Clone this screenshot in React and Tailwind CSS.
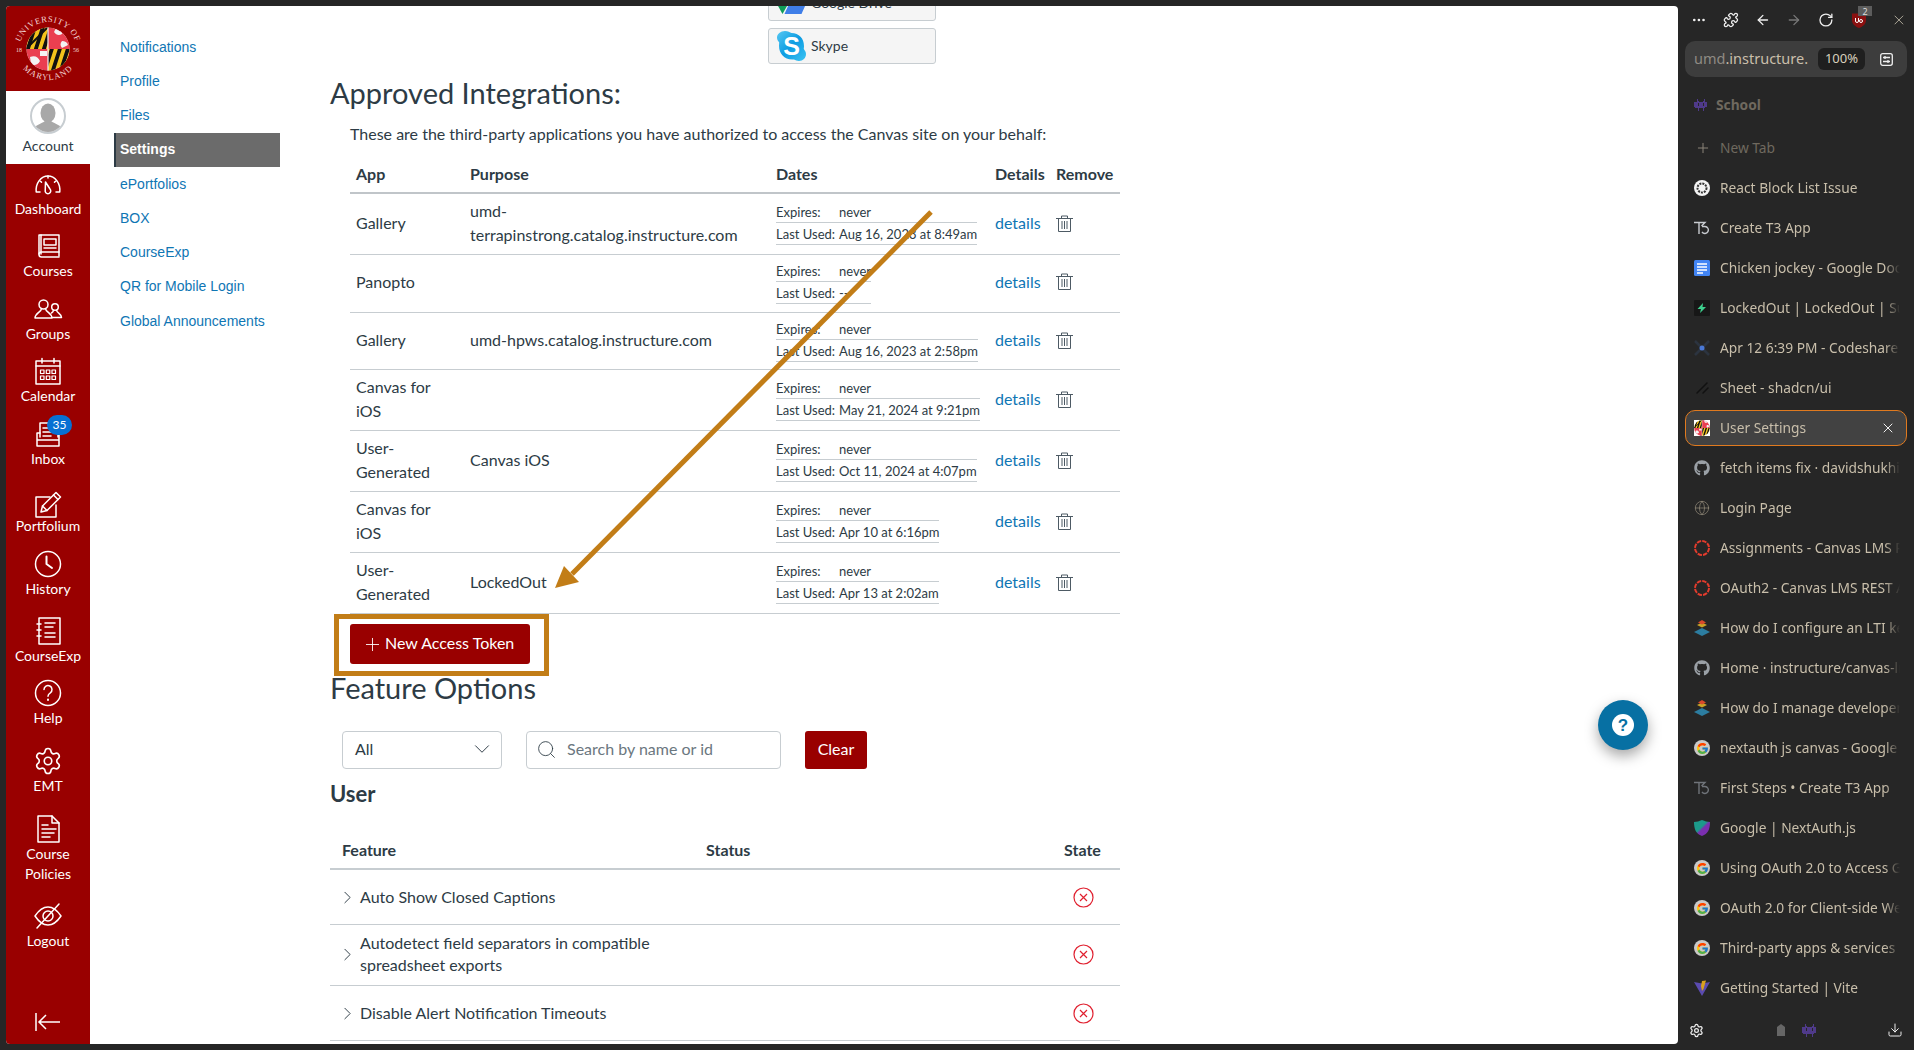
import React from "react";
import { FaGithub } from "react-icons/fa";
import { FcGoogle } from "react-icons/fc";
import { Globe, Settings, X, Plus, ChevronRight, ChevronDown, Search, ArrowLeft, ArrowRight, RotateCw, Puzzle, Ellipsis, Download } from "lucide-react";

// canvas global nav icons
function NavSvg({ children, w = 32, h = 32 }) {
  return (
    <svg width={w} height={h} viewBox="0 0 32 32" fill="none" stroke="white" strokeWidth="1.5" strokeLinecap="round" strokeLinejoin="round">
      {children}
    </svg>
  );
}

const DashboardIcon = () => (
  <NavSvg>
    <path d="M8 24H4.2C3.4 15 9 8 16 8s12.600 7 11.800 16H24" />
    <path d="M16 8v2M8 13l1.500 1.200M24 13l-1.500 1.200" />
    <path d="M13.500 14l4.500 7a2.800 2.800 0 1 1-4.800 2.400z" />
  </NavSvg>
);
const CoursesIcon = () => (
  <NavSvg>
    <path d="M9 24V5h18v21" />
    <path d="M27 22H9.500A2.500 2.500 0 0 0 7 24.500 2.500 2.500 0 0 0 9.500 27H27" />
    <path d="M7 24V5h2M12 9h12v6H12zM12 18h12" />
  </NavSvg>
);
const GroupsIcon = () => (
  <NavSvg>
    <circle cx="11.500" cy="11.500" r="4.500" />
    <path d="M9.500 15.500C9.500 19 3 20 3 25h17c0-5-6.500-6-6.500-9.500" />
    <circle cx="23" cy="14" r="3.300" />
    <path d="M21.500 17c0 2-2 3-2 3M24.500 17c0 3 5 3.500 5 7.500h-9" />
  </NavSvg>
);
const CalendarIcon = () => (
  <NavSvg>
    <rect x="4" y="6" width="24" height="23" />
    <path d="M4 11h24M10 3.500V8M22 3.500V8" />
    <path d="M8.500 15h3.500v3.500H8.500zM14.300 15h3.500v3.500h-3.500zM20 15h3.500v3.500H20zM8.500 21h3.500v3.500H8.500zM14.300 21h3.500v3.500h-3.500zM20 21h3.500v3.500H20z" strokeWidth="1.200" />
  </NavSvg>
);
const InboxIcon = () => (
  <NavSvg>
    <path d="M8 19V5h14l4 4v10" />
    <path d="M11 10h8M11 14h11M11 18h8" />
    <path d="M8 15H5v13h22V15h-1M5 22h22" />
  </NavSvg>
);
const PortfoliumIcon = () => (
  <NavSvg>
    <path d="M24 17v12H4V9h14" />
    <path d="M9 24l1.500-6L24 4.500l4.500 4.500L15 22.500z" />
    <path d="M21.500 7l4.500 4.500M10.500 18l4.500 4.500" />
  </NavSvg>
);
const HistoryIcon = () => (
  <NavSvg>
    <circle cx="16" cy="16" r="12.500" />
    <path d="M14.500 8.500V16l5.500 4" strokeWidth="2" />
  </NavSvg>
);
const CourseExpIcon = () => (
  <NavSvg>
    <path d="M7 3h21v26H7z" />
    <path d="M5 9h4M5 15h4M5 21h4M13 8h10M13 12h8M13 18h10M13 22h10" />
  </NavSvg>
);
const HelpIcon = () => (
  <NavSvg>
    <circle cx="16" cy="16" r="12.500" />
    <path d="M12 12.500a4 4 0 1 1 6.300 3.300c-1.500 1-2.300 1.800-2.300 3.400" />
    <path d="M16 22.500v.5" strokeWidth="2" />
  </NavSvg>
);
const EmtIcon = () => <Settings size={30} strokeWidth={1.300} color="white" />;
const PoliciesIcon = () => (
  <NavSvg>
    <path d="M6 3h14l7 7v19H6z" />
    <path d="M20 3v7h7" />
    <path d="M10 12h6M10 16h14M10 20h12M10 24h8" />
  </NavSvg>
);
const LogoutIcon = () => (
  <NavSvg>
    <path d="M3 16c4-6 8-9 13-9s9 3 13 9c-4 6-8 9-13 9S7 22 3 16z" />
    <circle cx="16" cy="16" r="5" />
    <path d="M5 28L27 4" />
  </NavSvg>
);

const navItems = [
  { label: "Dashboard", icon: DashboardIcon, cls: "h-[62px]" },
  { label: "Courses", icon: CoursesIcon, cls: "h-[63px]" },
  { label: "Groups", icon: GroupsIcon, cls: "h-[62px]" },
  { label: "Calendar", icon: CalendarIcon, cls: "h-[63px]" },
  { label: "Inbox", icon: InboxIcon, cls: "h-[70px]", badge: "35" },
  { label: "Portfolium", icon: PortfoliumIcon, cls: "h-[60px]", tight: true },
  { label: "History", icon: HistoryIcon, cls: "h-[67px]" },
  { label: "CourseExp", icon: CourseExpIcon, cls: "h-[62px]" },
  { label: "Help", icon: HelpIcon, cls: "h-[68px]" },
  { label: "EMT", icon: EmtIcon, cls: "h-[68px]" },
  { label: "Course Policies", icon: PoliciesIcon, cls: "h-[87px]" },
  { label: "Logout", icon: LogoutIcon, cls: "h-[60px]" },
];

function Flag({ size = 44 }) {
  return (
    <svg width={size} height={size} viewBox="0 0 44 44">
      <defs>
        <clipPath id={`flag${size}`}>
          <circle cx="22" cy="22" r="21.500" />
        </clipPath>
      </defs>
      <g clipPath={`url(#flag${size})`}>
        <rect width="44" height="44" fill="#e8e8e8" />
        <rect x="0" y="0" width="22" height="22" fill="#f3c31c" />
        <path d="M4 0v22M12 0v22M20 0v22" stroke="#111" strokeWidth="4" transform="skewX(-18) translate(5 0)" />
        <path d="M0 22L22 0" stroke="#111" strokeWidth="2" />
        <rect x="22" y="22" width="22" height="22" fill="#f3c31c" />
        <path d="M26 22v22M34 22v22M42 22v22" stroke="#111" strokeWidth="4" transform="skewX(-18) translate(7 0)" />
        <rect x="22" y="0" width="22" height="22" fill="#ea3f50" />
        <path d="M30 1c5 0 7 3 6 6-3 2-6 1-8-2zM36 14c3 0 5 1 6 4l-6 3c-2-2-2-5 0-7z" fill="#f3f3f3" />
        <rect x="0" y="22" width="22" height="22" fill="#ea3f50" />
        <path d="M4 30c5-2 8 0 10 4-2 4-6 5-9 3zM14 24h7v5h-7z" fill="#f3f3f3" />
        <rect x="21.400" y="0" width="1.200" height="44" fill="#f3f3f3" />
      </g>
    </svg>
  );
}

function Seal() {
  return (
    <div className="relative h-[84px] w-[84px]">
      <svg width="84" height="84" viewBox="0 0 84 84" className="absolute inset-0">
        <defs>
          <path id="arcTop" d="M13 44a29 29 0 0 1 58 0" />
          <path id="arcBottom" d="M9 40a33 33 0 0 0 66 0" />
        </defs>
        <text fill="#f2d5d5" fontFamily="Liberation Serif, serif" fontSize="8.500" letterSpacing="0.700">
          <textPath href="#arcTop" startOffset="50%" textAnchor="middle">UNIVERSITY OF</textPath>
        </text>
        <text fill="#f2d5d5" fontFamily="Liberation Serif, serif" fontSize="8.500" letterSpacing="1">
          <textPath href="#arcBottom" startOffset="50%" textAnchor="middle">MARYLAND</textPath>
        </text>
        <text x="10" y="45" fill="#f2d5d5" fontFamily="Liberation Serif, serif" fontSize="6">18</text>
        <text x="67" y="45" fill="#f2d5d5" fontFamily="Liberation Serif, serif" fontSize="6">56</text>
      </svg>
      <div className="absolute left-[20px] top-[20px]">
        <Flag size={44} />
      </div>
    </div>
  );
}

function GlobalNav() {
  return (
    <nav className="flex h-full w-[84px] shrink-0 flex-col bg-[#990000] font-['Lato',sans-serif] text-[14px] text-white">
      <div className="flex h-[85px] items-center justify-center">
        <Seal />
      </div>
      <div className="flex h-[73px] flex-col items-center bg-white text-[#2d3b45]">
        <div className="mt-[7px] flex h-9 w-9 items-end justify-center overflow-hidden rounded-full border-2 border-[#c7cdd1] bg-white">
          <svg width="32" height="30" viewBox="0 0 32 30">
            <ellipse cx="16" cy="11" rx="7.500" ry="9.500" fill="#a8a8a8" />
            <path d="M1 30c1-8 9-8 12-11h6c3 3 11 3 12 11z" fill="#a8a8a8" />
          </svg>
        </div>
        <span className="mt-[5px] leading-[14px]">Account</span>
      </div>
      <div className="mt-px flex flex-col">
        {navItems.map(({ label, icon: Icon, cls, badge, tight }) => (
          <div key={label} className={`relative flex flex-col items-center ${cls}`}>
            <div className="flex h-[38px] items-center">
              <Icon />
            </div>
            <span className={tight ? "w-[70px] text-center leading-[20px] -mt-[7px]" : "w-[70px] text-center leading-[20px] -mt-[4px]"}>{label}</span>
            {badge && (
              <span className="absolute left-[41px] top-0 flex h-[20px] w-[25px] items-center justify-center rounded-full bg-[#0770d3] text-[12px] leading-none">
                {badge}
              </span>
            )}
          </div>
        ))}
      </div>
      <div className="mt-auto mb-[12px] flex justify-center">
        <svg width="28" height="20" viewBox="0 0 28 20" fill="none" stroke="white" strokeWidth="1.500">
          <path d="M2 1v18M26 10H6M12 3l-7 7 7 7" />
        </svg>
      </div>
    </nav>
  );
}

const subNav = ["Notifications", "Profile", "Files", "Settings", "ePortfolios", "BOX", "CourseExp", "QR for Mobile Login", "Global Announcements"];

function SubNav() {
  return (
    <ul className="w-[240px] shrink-0 pl-[24px] pt-[24px] font-['Liberation_Sans',sans-serif] text-[14px]">
      {subNav.map((name) =>
        name === "Settings" ? (
          <li key={name} className="flex h-[34.25px] w-[166px] items-center border-l-2 border-[#2d3b45] bg-[#6b6b6b] pl-1 font-bold text-white">
            {name}
          </li>
        ) : (
          <li key={name} className="flex h-[34.25px] items-center pl-[6px] text-[#0f76b4]">
            {name}
          </li>
        )
      )}
    </ul>
  );
}

const tokens = [
  { app: "Gallery", purpose: "umd-\nterrapinstrong.catalog.instructure.com", expires: "never", used: "Aug 16, 2023 at 8:49am", cls: "h-[61px] pb-[2px]" },
  { app: "Panopto", purpose: "", expires: "never", used: "--", cls: "h-[58px] pb-[4px]" },
  { app: "Gallery", purpose: "umd-hpws.catalog.instructure.com", expires: "never", used: "Aug 16, 2023 at 2:58pm", cls: "h-[57px] pb-[2px]" },
  { app: "Canvas for\niOS", purpose: "", expires: "never", used: "May 21, 2024 at 9:21pm", cls: "h-[61px] pb-[2px]" },
  { app: "User-\nGenerated", purpose: "Canvas iOS", expires: "never", used: "Oct 11, 2024 at 4:07pm", cls: "h-[61px] pb-[2px]" },
  { app: "Canvas for\niOS", purpose: "", expires: "never", used: "Apr 10 at 6:16pm", cls: "h-[61px] pb-[2px]" },
  { app: "User-\nGenerated", purpose: "LockedOut", expires: "never", used: "Apr 13 at 2:02am", cls: "h-[61px] pb-[2px]" },
];

const TrashIcon = () => (
  <svg width="17" height="17" viewBox="0 0 17 17" fill="none" stroke="#4d5a64" strokeWidth="1">
    <path d="M0 3.500h17M5.500 3.500V1h6v2.500M2.500 3.500v13h12v-13M6 6v8M8.500 6v8M11 6v8" />
  </svg>
);

function TokensTable() {
  return (
    <div className="ml-[20px] w-[770px]">
      <div className="grid h-[39px] grid-cols-[114px_306px_219px_61px_70px] items-center border-b-2 border-[#c0c5c9] font-bold">
        {["App", "Purpose", "Dates", "Details", "Remove"].map((h) => (
          <div key={h} className="pl-[6px]">{h}</div>
        ))}
      </div>
      {tokens.map((t, i) => (
        <div key={i} className={`grid grid-cols-[114px_306px_219px_61px_70px] items-center border-b border-[#c7cdd1] ${t.cls}`}>
          <div className="whitespace-pre-line pl-[6px] leading-6">{t.app}</div>
          <div className="whitespace-pre-line pl-[6px] leading-6">{t.purpose}</div>
          <div className="pl-[6px] text-[13px] leading-[22px]">
            <div className="inline-flex flex-col">
              <div className="flex h-[22px] border-b border-[#c7cdd1]">
                <span className="w-[63px]">Expires:</span>
                <span>{t.expires}</span>
              </div>
              <div className="flex h-[22px] border-b border-[#c7cdd1]">
                <span className="w-[63px]">Last Used:</span>
                <span>{t.used}</span>
              </div>
            </div>
          </div>
          <div className="pl-[6px] text-[#0f76b4]">details</div>
          <div className="pl-[6px]"><TrashIcon /></div>
        </div>
      ))}
    </div>
  );
}

const features = [
  { name: "Auto Show Closed Captions", cls: "h-[55px]" },
  { name: "Autodetect field separators in compatible spreadsheet exports", cls: "h-[61px] pb-[2px]" },
  { name: "Disable Alert Notification Timeouts", cls: "h-[55px]" },
];

const OffIcon = () => (
  <svg width="21" height="21" viewBox="0 0 21 21" fill="none" stroke="#e0202f" strokeWidth="1.200">
    <circle cx="10.500" cy="10.500" r="9.500" />
    <path d="M7 7l7 7M14 7l-7 7" />
  </svg>
);

function FeatureOptions() {
  return (
    <>
      <h2 className="mt-[4px] h-[40px] text-[29px] font-normal leading-[40px]">Feature Options</h2>
      <div className="ml-[12px] mt-[23px] flex h-[38px] items-stretch">
        <div className="flex w-[160px] items-center justify-between rounded border border-[#c7cdd1] pb-[2px] pl-3 pr-[6px]">
          <span>All</span>
          <ChevronDown size={26} strokeWidth={0.900} />
        </div>
        <div className="ml-[24px] flex w-[255px] items-center rounded border border-[#c7cdd1] pb-[2px] pl-[9px] text-[#6b7780]">
          <Search size={21} strokeWidth={1} className="text-[#2d3b45]" />
          <span className="ml-[10px]">Search by name or id</span>
        </div>
        <button className="ml-[24px] w-[62px] rounded-[3px] bg-[#990000] pb-[2px] text-white">Clear</button>
      </div>
      <h3 className="mt-[9px] h-[32px] text-[22px] font-bold leading-[32px]">User</h3>
      <div className="mt-[10px] grid h-[50px] grid-cols-[376px_1fr_74px] items-center border-b-2 border-[#c7cdd1] pt-[11px] font-bold">
        <div className="pl-[12px]">Feature</div>
        <div>Status</div>
        <div className="pl-[18px]">State</div>
      </div>
      {features.map((f) => (
        <div key={f.name} className={`grid grid-cols-[376px_1fr_74px] items-center border-b border-[#c7cdd1] ${f.cls}`}>
          <div className="flex items-center pl-[7px]">
            <ChevronRight size={21} strokeWidth={1.100} className="shrink-0" />
            <span className="ml-[2px] w-[330px] leading-[22px]">{f.name}</span>
          </div>
          <div />
          <div className="flex justify-center"><OffIcon /></div>
        </div>
      ))}
    </>
  );
}

function ServiceButton({ name, children }) {
  return (
    <div className="ml-[438px] flex h-[36px] w-[168px] items-center rounded-[3px] border border-[#c7cdd1] bg-[#f5f5f5] pb-[2px] pl-2 text-[14px]">
      {children}
      <span className="ml-[5px]">{name}</span>
    </div>
  );
}

function Main() {
  return (
    <div className="w-[790px] shrink-0 -mt-[21px] font-['Lato',sans-serif] text-[16px] text-[#2d3b45]">
      <ServiceButton name="Google Drive">
        <svg width="29" height="26" viewBox="0 0 28 26">
          <path d="M9 1h10l9 15H18z" fill="#f7c427" />
          <path d="M9 1L0 16l5 9 9-16z" fill="#0f9d58" />
          <path d="M7 25h17l4-9H11z" fill="#3f7ee8" />
        </svg>
      </ServiceButton>
      <div className="mt-[7px]">
        <ServiceButton name="Skype">
          <svg width="29" height="30" viewBox="0 0 29 30" className="mt-[2px]">
            <defs>
              <linearGradient id="skypeGrad" x1="0" y1="0" x2="1" y2="1">
                <stop offset="0" stopColor="#56c8f2" />
                <stop offset="0.500" stopColor="#0d9ce2" />
                <stop offset="1" stopColor="#3cc4f3" />
              </linearGradient>
            </defs>
            <path d="M8 0c3 0 5 1.500 6.500 2C22 2 27 7.500 27 15c0 1.500-.2 2.500-.2 3 1 1.500 2.200 3 2.200 5 0 4-3 7-7 7-2 0-3.500-1-5-1.500C8 29.500 2 23 2 15c0-1.500.2-2.500.2-3.500C1 10 0 8.500 0 6.500 0 3 3.500 0 8 0z" fill="url(#skypeGrad)" />
            <text x="14.500" y="24" textAnchor="middle" fill="white" fontFamily="Liberation Sans, sans-serif" fontSize="25" fontWeight="700">S</text>
          </svg>
        </ServiceButton>
      </div>
      <h2 className="mt-[9px] h-[40px] text-[29px] font-normal leading-[40px]">Approved Integrations:</h2>
      <p className="ml-[20px] mt-[9px] h-[24px] leading-[24px]">These are the third-party applications you have authorized to access the Canvas site on your behalf:</p>
      <div className="mt-[9px]"><TokensTable /></div>
      <button className="ml-[20px] mt-[10px] flex h-[40px] w-[180px] items-center rounded-[3px] bg-[#990000] pb-[2px] pl-[12px] text-white">
        <Plus size={21} strokeWidth={1} className="mr-[2px] mt-[2px]" />
        New Access Token
      </button>
      <FeatureOptions />
    </div>
  );
}

// favicons for the tab list
const Invader = ({ color = "#4f3a8a", size = 16 }) => (
  <svg width={size} height={size} viewBox="0 0 11 11" fill={color} shapeRendering="crispEdges">
    <path d="M2 1h1v1h1v1h3V2h1V1h1v2h1v4h-1v1H8v2H7V8H4v2H3V8H1V7H0V3h2zM3 4v2h1V4zM7 4v2h1V4z" />
  </svg>
);
const T3 = ({ color = "#c8cbd0" }) => (
  <svg width="16" height="14" viewBox="0 0 16 14" fill="none" stroke={color} strokeWidth="1.400">
    <path d="M0 1.500h11L7.500 5M5 1.500V13M8 5.500h3a3.500 3.500 0 1 1-3 5.500" />
  </svg>
);
const ChatIcon = () => (
  <svg width="16" height="16" viewBox="0 0 16 16">
    <circle cx="8" cy="8" r="8" fill="#f4f4f4" />
    <circle cx="8" cy="8" r="4.500" fill="none" stroke="#333" strokeWidth="2" strokeDasharray="2 1" />
  </svg>
);
const DocsIcon = () => (
  <svg width="16" height="16" viewBox="0 0 16 16">
    <rect width="16" height="16" rx="1.500" fill="#4285f4" />
    <path d="M3 4h10M3 7h10M3 10h10M3 13h6" stroke="white" strokeWidth="1.300" />
  </svg>
);
const LockedOutIcon = () => (
  <svg width="16" height="16" viewBox="0 0 16 16">
    <rect width="16" height="16" rx="1" fill="#171717" />
    <path d="M9 3L3.500 9H7l-1 4 6-6H8.500z" fill="#3ecf8e" />
  </svg>
);
const CodeshareIcon = () => (
  <svg width="16" height="16" viewBox="0 0 16 16">
    <path d="M1 1l14 14M15 1L1 15" stroke="#2c3440" strokeWidth="2.500" />
    <circle cx="8" cy="8" r="2.500" fill="#4a78d6" />
  </svg>
);
const ShadcnIcon = () => (
  <svg width="16" height="16" viewBox="0 0 16 16" stroke="#111" strokeWidth="1.500" strokeLinecap="round">
    <path d="M13 3L3 13M14 8l-5 5" />
  </svg>
);
const CanvasIcon = () => (
  <svg width="16" height="16" viewBox="0 0 16 16" fill="none" stroke="#e33c2d" strokeWidth="2">
    <circle cx="8" cy="8" r="7" strokeDasharray="4.400 1.100" />
  </svg>
);
const StackIcon = () => (
  <svg width="16" height="16" viewBox="0 0 16 16">
    <path d="M3 5l5-2.500L13 5 8 7.500z" fill="#c9a227" />
    <path d="M4 2.500L8 0l4 2.500L8 4.500z" fill="#d9482b" />
    <path d="M0 12l8-4 8 4-8 4z" fill="#2c7da0" />
  </svg>
);
const GoogleIcon = () => (
  <span className="flex h-4 w-4 items-center justify-center rounded-full bg-[#c9c9c9]">
    <FcGoogle size={13} />
  </span>
);
const AuthIcon = () => (
  <svg width="16" height="16" viewBox="0 0 16 16">
    <defs>
      <linearGradient id="authGrad" x1="0" y1="0" x2="1" y2="1">
        <stop offset="0.450" stopColor="#1c9a8a" />
        <stop offset="0.550" stopColor="#7b2fb0" />
      </linearGradient>
    </defs>
    <path d="M0 2c3 0 5-1 8-2 3 1 5 2 8 2 0 7-2 12-8 14C2 14 0 9 0 2z" fill="url(#authGrad)" />
  </svg>
);
const ViteIcon = () => (
  <svg width="16" height="16" viewBox="0 0 16 16">
    <path d="M0 2l8 1.500L16 2 8 16z" fill="#5b4bb0" />
    <path d="M8 1l4-.500L9.500 9 8 11l-1-5z" fill="#d9a11f" />
  </svg>
);
const GithubIcon = () => <FaGithub size={16} color="#9aa0a6" />;
const GlobeIcon = () => <Globe size={16} strokeWidth={1} color="#9a917f" />;
const UmdIcon = () => <span className="block h-4 w-4 overflow-hidden bg-white"><Flag size={16} /></span>;

const tabs = [
  { title: "React Block List Issue", icon: ChatIcon },
  { title: "Create T3 App", icon: T3 },
  { title: "Chicken jockey - Google Docs", icon: DocsIcon },
  { title: "LockedOut | LockedOut | Supabase", icon: LockedOutIcon },
  { title: "Apr 12 6:39 PM - Codeshare", icon: CodeshareIcon },
  { title: "Sheet - shadcn/ui", icon: ShadcnIcon },
  { title: "User Settings", icon: UmdIcon, active: true },
  { title: "fetch items fix · davidshukhin", icon: GithubIcon },
  { title: "Login Page", icon: GlobeIcon },
  { title: "Assignments - Canvas LMS REST", icon: CanvasIcon },
  { title: "OAuth2 - Canvas LMS REST API", icon: CanvasIcon },
  { title: "How do I configure an LTI key", icon: StackIcon },
  { title: "Home · instructure/canvas-lms", icon: GithubIcon },
  { title: "How do I manage developer keys", icon: StackIcon },
  { title: "nextauth js canvas - Google Search", icon: GoogleIcon },
  { title: "First Steps • Create T3 App", icon: () => <T3 color="#70747a" /> },
  { title: "Google | NextAuth.js", icon: AuthIcon },
  { title: "Using OAuth 2.0 to Access Google", icon: GoogleIcon },
  { title: "OAuth 2.0 for Client-side Web", icon: GoogleIcon },
  { title: "Third-party apps & services", icon: GoogleIcon },
  { title: "Getting Started | Vite", icon: ViteIcon },
];

function Tab({ title, icon: Icon, active }) {
  return (
    <div className="flex h-[40px] items-center">
      <div className={`flex h-9 w-full items-center rounded-[10px] border pl-[8px] ${active ? "border-[#e07a1f] bg-[#424242]" : "border-transparent"}`}>
        <span className="flex w-4 shrink-0 justify-center"><Icon /></span>
        <span className="ml-[10px] w-[180px] overflow-hidden whitespace-nowrap text-[#c9bfab] [mask-image:linear-gradient(to_right,black_165px,transparent_180px)]">
          {title}
        </span>
        {active && <X size={16} strokeWidth={1.500} color="#f0f0f0" className="-ml-[20px] shrink-0" />}
      </div>
    </div>
  );
}

function Sidebar() {
  return (
    <aside className="flex h-full w-[236px] flex-col px-[7px] font-['Noto_Sans',sans-serif] text-[13.75px]">
      <div className="flex h-[41px] items-center pb-[1px] pl-[6px] text-[#eeeeee]">
        <Ellipsis size={16} strokeWidth={2} />
        <Puzzle size={16} strokeWidth={2} className="ml-[16px]" />
        <ArrowLeft size={16} strokeWidth={2} className="ml-[16px]" />
        <ArrowRight size={16} strokeWidth={2} className="ml-[16px] text-[#777777]" />
        <RotateCw size={16} strokeWidth={2} className="ml-[16px]" />
        <div className="relative ml-[18px]">
          <svg width="14" height="16" viewBox="0 0 14 16">
            <path d="M0 1.500h14V8c0 4-3 6.500-7 8-4-1.500-7-4-7-8z" fill="#8a1010" />
            <path d="M3.500 6v3a1.500 1.500 0 0 0 3 0V6M7.500 9a1.500 1.500 0 1 0 3 0 1.500 1.500 0 1 0-3 0" fill="none" stroke="white" strokeWidth="1" />
          </svg>
          <span className="absolute -right-[6px] -top-[6px] flex h-[10px] w-[14px] items-center justify-center bg-[#5c5c5c] text-[9px] leading-none text-[#dddddd]">2</span>
        </div>
        <X size={16} strokeWidth={1} className="ml-[25px] text-[#f0e6cf]" />
      </div>
      <div className="flex h-9 items-center rounded-[10px] bg-[#3d3d3d] pl-[9px] pr-[14px] text-[14.5px]">
        <span className="w-[116px] overflow-hidden whitespace-nowrap text-[#8f8b84]">
          umd<span className="text-[#c9bfab]">.instructure.</span>
        </span>
        <span className="ml-[8px] flex h-[22px] w-[47px] items-center justify-center rounded-[6px] bg-[#1f1f1f] text-[13px] text-[#d9d0bd]">100%</span>
        <svg width="13" height="13" viewBox="0 0 13 13" fill="none" stroke="#eeeeee" strokeWidth="1.300" className="ml-auto">
          <rect x="0.700" y="0.700" width="11.600" height="11.600" rx="2" />
          <path d="M3 4.500h7M3 8.500h7M5 3v3M8 7v3" />
        </svg>
      </div>
      <div className="flex h-[47px] items-center pl-[9px] pt-[9px] font-bold text-[#6f695f]">
        <Invader size={14} />
        <span className="ml-[8px]">School</span>
      </div>
      <div className="flex h-[44px] items-center pl-[10px] pt-[4px] text-[#6f695f]">
        <Plus size={16} strokeWidth={1.500} className="text-[#8a8378]" />
        <span className="ml-[9px]">New Tab</span>
      </div>
      <div className="flex flex-col">
        {tabs.map((t, i) => <Tab key={i} {...t} />)}
      </div>
      <div className="mt-auto flex h-[40px] items-center pl-[4px] pr-[4px] text-[#eeeeee]">
        <Settings size={15} strokeWidth={2} />
        <span className="ml-[71px]">
          <svg width="12" height="12" viewBox="0 0 12 12" fill="#666666"><path d="M6 0l4 3v9H2V3z" /></svg>
        </span>
        <span className="ml-[15px]"><Invader size={15} /></span>
        <Download size={16} strokeWidth={1.500} className="ml-auto" />
      </div>
    </aside>
  );
}

export default function App() {
  return (
    <div className="relative flex h-screen w-full overflow-hidden bg-[#262626]">
      <div className="my-[6px] ml-[6px] flex w-[1672px] shrink-0 overflow-hidden rounded-[4px] bg-white">
        <GlobalNav />
        <SubNav />
        <Main />
      </div>
      <Sidebar />

      {/* annotation drawn over the page */}
      <svg width="1914" height="1050" viewBox="0 0 1914 1050" className="pointer-events-none absolute inset-0" fill="none">
        <rect x="336.500" y="616.500" width="210" height="57" stroke="#c27d17" strokeWidth="5" />
        <path d="M931 212L572 574" stroke="#c27d17" strokeWidth="5" />
        <path d="M555 588l9-22 15 16z" fill="#c27d17" />
      </svg>

      <div className="absolute left-[1598px] top-[700px] flex h-[50px] w-[50px] items-center justify-center rounded-full bg-[#0770a3] shadow-[0_6px_14px_rgba(0,0,0,0.35)]">
        <span className="flex h-[22px] w-[22px] items-center justify-center rounded-full bg-white font-['Liberation_Sans',sans-serif] text-[17px] font-bold leading-none text-[#0770a3]">?</span>
      </div>
    </div>
  );
}
